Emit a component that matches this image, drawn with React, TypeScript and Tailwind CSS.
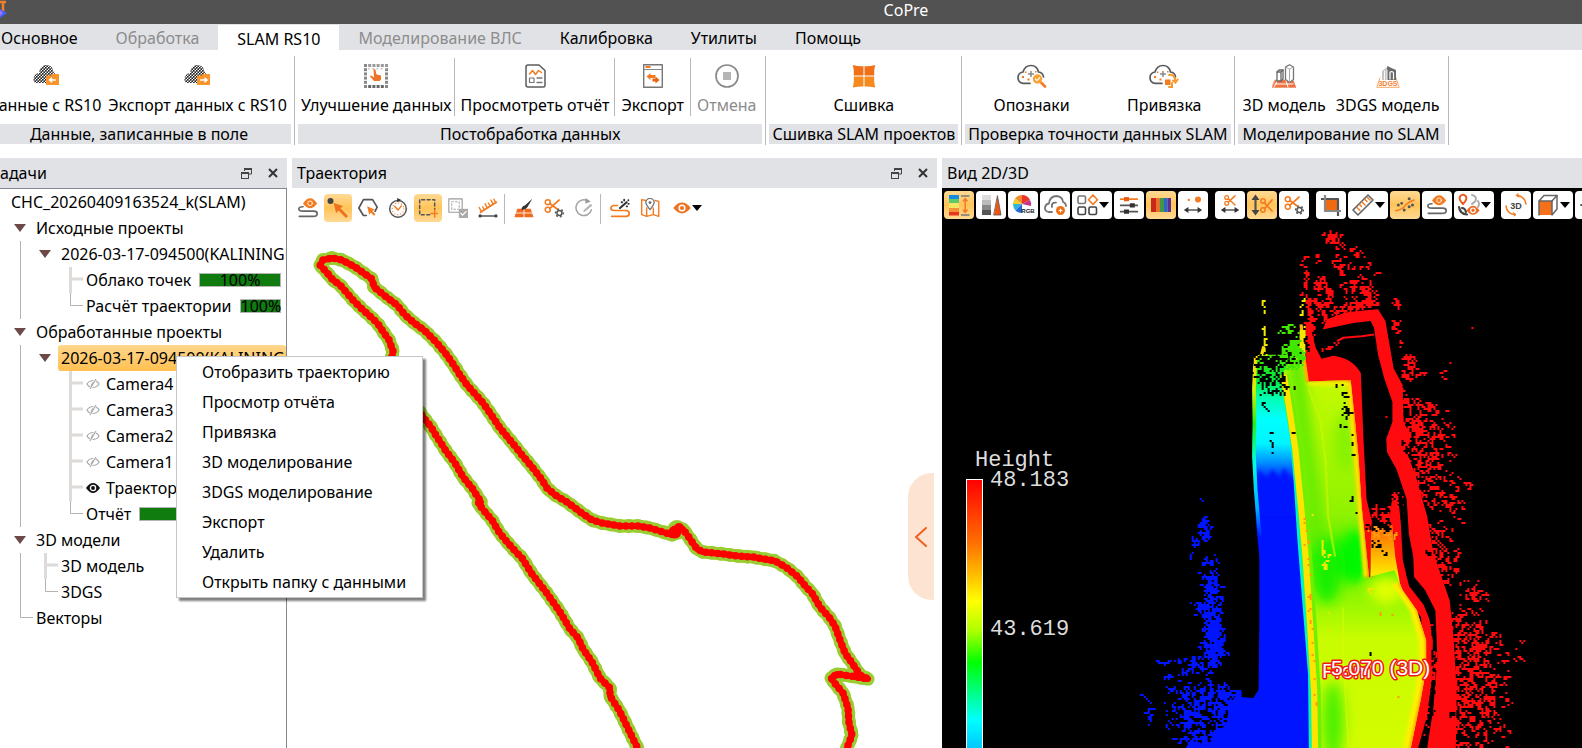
import React from 'react';
import clsx from 'clsx';

type IconFn = () => React.ReactElement;

const O = '#f47b20';

function Svg({ size = 'w-6 h-6', children }: { size?: string; children: React.ReactNode }) {
  return (
    <svg viewBox="0 0 24 24" className={clsx('shrink-0', size)} fill="none" strokeLinecap="round" strokeLinejoin="round" aria-hidden="true">
      {children}
    </svg>
  );
}

/* ---------- ribbon icons ---------- */

function CloudFolder({ arrow, className }: { arrow: 'left' | 'right'; className?: string }) {
  return (
    <svg viewBox="0 0 27 24" className={clsx('h-6 w-[27px]', className)} aria-hidden="true">
      <defs>
        <pattern id="dots" width="3" height="3" patternUnits="userSpaceOnUse">
          <rect width="3" height="3" fill="#fff" />
          <circle cx="0.8" cy="0.8" r="0.95" fill="#222" />
          <circle cx="2.3" cy="2.3" r="0.95" fill="#222" />
        </pattern>
      </defs>
      <path d="M1 18 C-1 13 3 9 6 9 C7 3 10 1 13 1 C18 1 20 4 20.500 8 L23 11 V19 H3 Z" fill="url(#dots)" />
      <path d="M13 11.500 h4.500 l1 -1.500 h7.500 v11 h-13 z" fill="#f9952b" />
      {arrow === 'left' ? (
        <path d="M23 16 h-6 M19 13.800 L16.500 16 L19 18.200" stroke="#fff" strokeWidth="1.500" fill="none" />
      ) : (
        <path d="M16 16 h6 M20.500 13.800 L23 16 L20.500 18.200" stroke="#fff" strokeWidth="1.500" fill="none" />
      )}
    </svg>
  );
}

const ImproveIcon: IconFn = () => (
  <Svg>
    {[0, 4.2, 8.4, 12.6, 16.8, 21].map((p) => (
      <g key={p}>
        <rect x={p} y="0" width="3" height="3" fill="#9a9a9a" />
        <rect x={p} y="21" width="3" height="3" fill="#666" />
        <rect x="0" y={p} width="3" height="3" fill="#888" />
        <rect x="21" y={p} width="3" height="3" fill="#888" />
        <rect x={p} y="4" width="1.500" height="1.500" fill="#bbb" />
      </g>
    ))}
    <path d="M9.500 5.500 q1.500 -1 2 .5 l1 4.500 l4.500 1 v4 l-1.500 1.500 h-5.500 l-4 -4.500 q.5 -1.500 2 -.5 l2 1.500 z" fill="#ee7328" />
  </Svg>
);

const ReportIcon: IconFn = () => (
  <Svg>
    <path d="M5 1 h11 l6 5.500 v15 q0 1.500 -1.500 1.500 h-15.500 q-2 0 -2 -2 v-18 q0 -2 2 -2 z" stroke="#5c5c5c" strokeWidth="1.500" />
    <path d="M6.500 10 l3 -3.500 l3 4 l3 -4 l3 2" stroke={O} strokeWidth="1.500" />
    <rect x="6.500" y="14" width="4.500" height="4.500" stroke="#777" strokeWidth="1.200" />
    <path d="M14 14 h5 M14 18.500 h5" stroke="#777" strokeWidth="1.300" />
  </Svg>
);

const ExportIcon: IconFn = () => (
  <Svg>
    <rect x="2.700" y=".7" width="18.600" height="22.600" stroke="#777" strokeWidth="1.400" />
    <path d="M3 5.500 h18" stroke="#888" strokeWidth="1" />
    <rect x="4.500" y="2" width="5" height="2" fill={O} />
    <path d="M5.500 12.500 l4 -3.500 v2 h5 v3 h-5 v2 z" fill={O} />
    <path d="M18.500 16 l-4 -3.500 v2 h-3 v3 h3 v2 z" fill="#e86010" />
  </Svg>
);

const CancelIcon: IconFn = () => (
  <Svg>
    <circle cx="12" cy="12" r="11" stroke="#8a8a8a" strokeWidth="1.700" />
    <rect x="8" y="8" width="8" height="8" fill="#b5b5b5" />
  </Svg>
);

const StitchIcon: IconFn = () => (
  <Svg>
    <path d="M.8 1 Q6 2.500 11.500 2.200 V11.500 H1.800 Q2.300 6 .8 1 Z M23.200 1 Q18 2.500 12.500 2.200 V11.500 H22.200 Q21.700 6 23.200 1 Z" fill="#f07018" />
    <path d="M.8 23.500 Q6 22.500 11.500 22.600 V12.600 H1.800 Q2.300 18 .8 23.500 Z M23.200 23.500 Q18 22.500 12.500 22.600 V12.600 H22.200 Q21.700 18 23.200 23.500 Z" fill="#f58a20" />
  </Svg>
);

function CheckCloud({ children }: { children: React.ReactNode }) {
  return (
    <svg viewBox="0 0 30 24" className="h-6 w-[30px]" fill="none" strokeLinecap="round" aria-hidden="true">
      <path d="M13 19.300 H6 Q1 18.500 1 13.500 Q1 9 6 8 Q8 1.500 14 1.500 Q20 1.500 21.500 8 Q26 8.500 26.500 13" stroke="#5a5a5a" strokeWidth="1.700" />
      <path d="M14 7.500 v5 M11.500 10 h5" stroke="#888" strokeWidth="1.500" />
      <g fill={O}>
        <rect x="5" y="12" width="2" height="2" /><rect x="8" y="7.500" width="1.500" height="1.500" /><rect x="10.500" y="14.500" width="2" height="2" /><rect x="18" y="7" width="1.500" height="1.500" />
      </g>
      {children}
    </svg>
  );
}

const MarksIcon: IconFn = () => (
  <CheckCloud>
    <circle cx="20.500" cy="15" r="4.700" fill="#f9a030" />
    <path d="M18.500 15 l1.500 1.700 l2.800 -3" stroke="#fff" strokeWidth="1.200" />
    <path d="M24.500 19 l3.500 3.500" stroke={O} strokeWidth="2.600" />
  </CheckCloud>
);

const BindIcon: IconFn = () => (
  <CheckCloud>
    <rect x="16" y="15.500" width="5.500" height="5.500" fill={O} />
    <path d="M20 11 q5 -1 6 4 v2 M24 16.500 l2.500 2 l2.200 -3 M20 23 h3 v-4" stroke="#f79a2a" strokeWidth="2" />
  </CheckCloud>
);

const Model3DIcon: IconFn = () => (
  <Svg>
    <path d="M3 16 H21 L24 23.500 H0 Z" fill="#f07040" stroke="#ee8860" strokeWidth=".6" />
    <path d="M6 16 L2 23 M14 17 L16 23 M3 20 h18" stroke="#fff" strokeWidth="1" />
    <path d="M5 8 l2 -2 h4 v9 l-2 2 h-4 z" fill="#fff" stroke="#666" strokeWidth="1.300" />
    <path d="M5 8 h4 v8.500 M9 8 l2 -2" stroke="#666" strokeWidth="1.300" />
    <path d="M13.500 3 l4 -2.300 l4 2.300 v12.500 l-4 3 l-4 -3 z" fill="#fff" stroke="#777" strokeWidth="1.300" />
    <path d="M13.500 3 l4 2.200 l4 -2.200 M17.500 5.200 v13" stroke="#aaa" strokeWidth="1" />
  </Svg>
);

const Gs3DIcon: IconFn = () => (
  <Svg>
    <path d="M4 14 L.8 23.300 H23.200 L20 14" stroke="#f5a860" strokeWidth="1" />
    <path d="M6 7 L13 2 V16 H6 Z" fill="#c4c4c4" />
    <path d="M11 2 l9 4 v10 h-9 z" fill="#6a6a6a" />
    <path d="M8.500 7 v9 M11 6 v10" stroke="#fff" strokeWidth=".9" />
    <path d="M14 15 v-7 q3 -1 3.500 1 v6" stroke="#fff" strokeWidth="1.200" />
    <text x="12" y="22.300" textAnchor="middle" fill="#f08030" fontFamily="Liberation Sans, sans-serif" fontWeight="700" fontSize="7">3DGS</text>
  </Svg>
);

/* ---------- toolbar icons ---------- */

const TrackEyeIcon: IconFn = () => (
  <Svg size="w-5 h-5">
    <path d="M6 10.500 Q1 10.500 1 13 Q1 15.800 6 15.800 H19 Q23 15.800 23 18.800 Q23 22 18 22 H1.500" stroke="#666" strokeWidth="2" />
    <path d="M6 6.500 Q14.500 -6 23 6.500 Q14.500 18 6 6.500 Z" fill={O} />
    <circle cx="14.500" cy="6.300" r="2.800" stroke="#fff" strokeWidth="1" />
  </Svg>
);

const PickIcon: IconFn = () => (
  <Svg>
    <circle cx="4.500" cy="5" r="3" fill="#444" />
    <path d="M7.500 7 L17 10 L14.500 12.300 L22 20 L20 22 L12.500 14.500 L10.200 17 Z" fill="#ee7320" />
  </Svg>
);

const HexIcon: IconFn = () => (
  <Svg size="w-5 h-5">
    <path d="M10 21 H6.500 L1 12 L6.500 2 H17.500 L23 11 L20.500 16" stroke="#555" strokeWidth="2" />
    <path d="M11 10 l9.500 4 l-3.500 1.500 l4 4 l-1.800 1.800 l-4 -4 l-1.700 3 z" fill={O} />
  </Svg>
);

const ClockIcon: IconFn = () => (
  <Svg size="w-5 h-5">
    <circle cx="12" cy="13" r="10" stroke="#555" strokeWidth="1.800" />
    <circle cx="12" cy="13" r="7" stroke={O} strokeWidth="1.500" strokeDasharray="0 3.660" />
    <path d="M8 10 l4 4.500 l4 -5" stroke={O} strokeWidth="1.700" />
    <path d="M11 0 l5 2.500 l-5 2.500 z" fill="#333" />
  </Svg>
);

const SelectAddIcon: IconFn = () => (
  <Svg size="w-5 h-5">
    <path d="M14 20 H2 V2 H20 V14" stroke="#555" strokeWidth="1.800" strokeDasharray="3.500 3" />
    <path d="M20 14 v9 M15.500 18.500 h8" stroke={O} strokeWidth="1.800" />
  </Svg>
);

const SelectOkIcon: IconFn = () => (
  <Svg size="w-5 h-5">
    <rect x="1" y="1" width="16" height="16" stroke="#999" strokeWidth="1.300" />
    <rect x="4.500" y="4.500" width="9" height="9" stroke="#aaa" strokeWidth="1.300" strokeDasharray="2 2.500" />
    <rect x="13" y="13" width="11" height="11" fill="#aaa" />
    <path d="M15.500 18.500 l2 2 l4 -4" stroke="#fff" strokeWidth="1.500" />
  </Svg>
);

const MeasureIcon: IconFn = () => (
  <Svg size="w-5 h-5">
    <path d="M3 17 L22 5" stroke={O} strokeWidth="2.200" />
    <path d="M4 16 L1.500 11.500 M7.500 14 L5.500 10.500 M11 11.500 L8.500 7 M14.500 9.500 L12.500 6 M18 7 L15.500 2.500 M21 5 L19 1.500" stroke={O} strokeWidth="1.700" />
    <path d="M3 21.500 h18" stroke="#555" strokeWidth="1.700" />
    <circle cx="2.500" cy="21.500" r="2" fill="#444" /><circle cx="21.500" cy="21.500" r="2" fill="#444" />
  </Svg>
);

const PaintIcon: IconFn = () => (
  <Svg size="w-5 h-5">
    <path d="M4 13 H20 L23.500 23 H.5 Z" fill="#ee6a1e" />
    <path d="M2 18 H22 M12 13 V23" stroke="#fff" strokeWidth="1" />
    <path d="M22 1 L13 9 Q9 10 9 14 Q13 15 16 11 Z" fill="#333" />
  </Svg>
);

const CutGearIcon: IconFn = () => (
  <Svg size="w-5 h-5">
    <circle cx="4.500" cy="5" r="3" stroke={O} strokeWidth="1.800" />
    <circle cx="4.500" cy="14" r="3" stroke={O} strokeWidth="1.800" />
    <path d="M7 6.500 L17 14 M7 12.500 L18 2.500" stroke={O} strokeWidth="2.200" />
    <circle cx="18.500" cy="18" r="5" fill="#fff" />
    <circle cx="18.500" cy="18" r="3" stroke="#555" strokeWidth="1.800" />
    <circle cx="18.500" cy="18" r="4.700" stroke="#555" strokeWidth="1.600" strokeDasharray="1 3.900" />
  </Svg>
);

const RefreshIcon: IconFn = () => (
  <Svg size="w-5 h-5">
    <path d="M17.500 4 A9.500 9.500 0 1 0 21 14" stroke="#a3a3a3" strokeWidth="1.800" />
    <path d="M14 0 l6 4.500 l-6.500 2 z" fill="#999" />
    <path d="M20 7 L12 14 L11 17 L14 16 L22 9 Z" fill="#b8b8b8" />
  </Svg>
);

const WandIcon: IconFn = () => (
  <Svg size="w-5 h-5">
    <path d="M9 9 H4 Q1 10 1 12 Q1 15 5 15 H19 Q23 15 23 18.500 Q23 22 19 22 H2" stroke={O} strokeWidth="2" />
    <path d="M12 12 L20 5" stroke="#333" strokeWidth="2.500" />
    <path d="M17 2 v1 M22 7 h.5 M14 5 h.5 M22 2.500 v.2 M20 10 h.5" stroke="#333" strokeWidth="2.300" />
  </Svg>
);

const MapIcon: IconFn = () => (
  <Svg size="w-5 h-5">
    <path d="M7 3 L2 2 V20 L8 22 L16 20 L22.500 22 V4 L18 3 M8 12 V22 M16 12 V20" stroke={O} strokeWidth="1.700" />
    <path d="M12 14 Q7 8 7 5.500 A5 5 0 0 1 17 5.500 Q17 8 12 14 Z" fill="#fff" stroke="#777" strokeWidth="1.600" />
    <circle cx="12" cy="5.500" r="1.700" fill="#666" />
  </Svg>
);

const EyeIcon: IconFn = () => (
  <Svg size="w-5 h-5">
    <path d="M1.500 12 Q12 -1 22.500 12 Q12 25 1.500 12 Z" fill="#ee7320" />
    <circle cx="12" cy="12" r="4.300" fill="#fff" /><circle cx="12" cy="12" r="2.500" fill="#ee7320" />
  </Svg>
);

const HeightIcon: IconFn = () => (
  <Svg>
    <rect x="2" y="2" width="10" height="4" fill="#1689e0" /><rect x="2" y="6" width="10" height="4" fill="#5cc96a" />
    <rect x="2" y="10" width="10" height="5" fill="#f5e663" /><rect x="2" y="15" width="10" height="4" fill="#f5923a" />
    <rect x="2" y="19" width="10" height="3.500" fill="#e8391e" />
    <path d="M14.500 3 h7.500 M14.500 22 h7.500" stroke="#777" strokeWidth="1.500" />
    <path d="M18.200 6 v13 M16.300 8 l1.900 -2.500 l1.900 2.500 M16.300 17 l1.900 2.500 l1.900 -2.500" stroke={O} strokeWidth="1.500" />
  </Svg>
);

const IntensityIcon: IconFn = () => (
  <Svg>
    <rect x="3" y="2" width="9" height="5" fill="#ddd" /><rect x="3" y="7" width="9" height="5" fill="#bbb" />
    <rect x="3" y="12" width="9" height="5" fill="#888" /><rect x="3" y="17" width="9" height="5" fill="#555" />
    <path d="M18.500 3 L22 22 H15 Z" fill="#f0560f" stroke="#555" strokeWidth=".8" />
  </Svg>
);

const RgbIcon: IconFn = () => (
  <Svg>
    <path d="M11 11 L11 2 A9 9 0 0 1 19 7 Z" fill="#e9362c" /><path d="M11 11 L19 7 A9 9 0 0 1 20 13 Z" fill="#c5318d" />
    <path d="M11 11 L11 2 A9 9 0 0 0 4 5.500 Z" fill="#f28b30" /><path d="M11 11 L4 5.500 A9 9 0 0 0 2 11 Z" fill="#f0d030" />
    <path d="M11 11 L2 11 A9 9 0 0 0 4.500 17.500 Z" fill="#35b6d6" /><path d="M11 11 L4.500 17.500 A9 9 0 0 0 11 20 Z" fill="#2468e0" />
    <text x="17" y="20" textAnchor="middle" fontSize="6" fontWeight="700" fontFamily="Liberation Sans, sans-serif" fill="#222">RGB</text>
  </Svg>
);

const CloudClassIcon: IconFn = () => (
  <Svg>
    <path d="M9 19 H5.500 Q1.500 18 2 14.500 Q2.500 11 6 10.500 Q7 3 13.500 3 Q19.500 3.500 20 9 Q23 10 23 13" stroke="#777" strokeWidth="1.800" />
    <path d="M9 14 Q8 9.500 13 9.500" stroke="#666" strokeWidth="1.700" />
    <circle cx="17.500" cy="17.500" r="4.500" fill="#f07018" />
    <path d="M17.500 16 v3 M16 17.500 h3" stroke="#fff" strokeWidth="1.100" />
  </Svg>
);

const ShapesIcon: IconFn = () => (
  <Svg>
    <rect x="3" y="3" width="7.500" height="7.500" rx="1.500" stroke="#777" strokeWidth="1.600" />
    <path d="M18 2 l4.500 4.700 l-4.500 4.700 l-4.500 -4.700 z" stroke={O} strokeWidth="1.600" />
    <rect x="3" y="14" width="7.500" height="7.500" rx="1.500" stroke="#444" strokeWidth="1.600" />
    <rect x="14" y="14" width="7.500" height="7.500" rx="1.500" stroke="#444" strokeWidth="1.600" />
  </Svg>
);

const SlidersIcon: IconFn = () => (
  <Svg size="w-5 h-5">
    <path d="M2 5 h20" stroke={O} strokeWidth="2" /><path d="M2 12.500 h20 M2 20 h20" stroke="#555" strokeWidth="2" />
    <path d="M6 5 h6" stroke="#e85c10" strokeWidth="5" strokeLinecap="butt" />
    <path d="M13 12.500 h6 M6 20 h6" stroke="#333" strokeWidth="5" strokeLinecap="butt" />
  </Svg>
);

const BandsIcon: IconFn = () => (
  <Svg>
    <rect x="2" y="5" width="5" height="14" fill="#c8271b" /><rect x="7" y="5" width="4" height="14" fill="#e8702a" />
    <rect x="11" y="5" width="4" height="14" fill="#3e9a4a" /><rect x="15" y="5" width="3.500" height="14" fill="#2a67c9" />
    <rect x="18.500" y="5" width="3.500" height="14" fill="#5c2f93" />
  </Svg>
);

function HArrow() {
  return (
    <>
      <path d="M4 18 h16" stroke="#555" strokeWidth="1.800" />
      <path d="M6.500 14.500 L1 18 L6.500 21.500 Z M17.500 14.500 L23 18 L17.500 21.500 Z" fill="#333" />
    </>
  );
}

const PointSizeIcon: IconFn = () => (
  <Svg size="w-5 h-5">
    <circle cx="7" cy="6" r="1.400" fill={O} /><circle cx="18" cy="5.500" r="3.600" fill={O} /><HArrow />
  </Svg>
);

const CutHIcon: IconFn = () => (
  <Svg size="w-5 h-5">
    <circle cx="8" cy="3" r="2.300" stroke={O} strokeWidth="1.500" /><circle cx="8" cy="10" r="2.300" stroke={O} strokeWidth="1.500" />
    <path d="M10 4.500 L18 12 M10 8.500 L18 1" stroke={O} strokeWidth="1.800" />
    <HArrow />
  </Svg>
);

const CutVIcon: IconFn = () => (
  <Svg>
    <path d="M5.500 5 v14" stroke="#555" strokeWidth="2.200" />
    <path d="M1.500 7 L5.500 1.500 L9.500 7 Z M1.500 17 L5.500 22.500 L9.500 17 Z" fill="#444" />
    <circle cx="13" cy="8" r="2.200" stroke={O} strokeWidth="1.500" /><circle cx="13" cy="17" r="2.200" stroke={O} strokeWidth="1.500" />
    <path d="M14.500 10 L22 18 M14.500 15.500 L22 7" stroke={O} strokeWidth="1.800" />
  </Svg>
);

const CropIcon: IconFn = () => (
  <Svg>
    <rect x="7" y="6" width="12" height="12" fill="#f06a10" />
    <path d="M2 6 H19 V23" stroke="#555" strokeWidth="2.200" strokeLinecap="butt" />
    <path d="M6 2 V18 H22" stroke="#888" strokeWidth="2.200" strokeLinecap="butt" />
  </Svg>
);

const RulerIcon: IconFn = () => (
  <Svg>
    <path d="M2 17 L17 2 L22 7 L7 22 Z" stroke="#666" strokeWidth="1.600" />
    <path d="M6 14.500 l3 3 M8.500 11.500 l2 2 M11 9 l3 3 M14 6.500 l2 2 M16.500 4.500 l2.500 2.500" stroke={O} strokeWidth="1.500" />
  </Svg>
);

const LinkPtsIcon: IconFn = () => (
  <Svg size="w-5 h-5">
    <path d="M1 19 Q9 17 12 13 Q15 9 23 6" stroke={O} strokeWidth="1.800" />
    <g fill="#555">
      <circle cx="4" cy="12" r="1.800" /><circle cx="8" cy="10" r="1.600" /><circle cx="11" cy="18" r="1.800" /><circle cx="17" cy="14" r="1.800" /><circle cx="21" cy="12" r="1.800" /><circle cx="17" cy="4.500" r="1.800" />
    </g>
  </Svg>
);

const PinEyeIcon: IconFn = () => (
  <Svg>
    <path d="M6 11 Q1.500 6.500 3 3.500 Q6 0 9 3.500 Q10.500 6.500 6 11 Z" stroke="#ee5a20" strokeWidth="2" />
    <path d="M15 2 Q20 3 18.500 8 L15 11 M21 8 q2 3 0 6" stroke="#aaa" strokeWidth="1.900" />
    <path d="M2 14 Q3 21 10 21.500 M5 15 Q8 15 9 19" stroke="#444" strokeWidth="2.200" />
    <path d="M9.500 17.500 Q16 8 22.500 17.500 Q16 26 9.500 17.500 Z" fill="#ee6a20" />
    <circle cx="16" cy="17.300" r="2.300" stroke="#fff" strokeWidth="1.200" />
  </Svg>
);

const Rot3DIcon: IconFn = () => (
  <Svg>
    <path d="M14 2.500 Q21 4 22 11 M2 13 Q3 20.500 10 21.500" stroke={O} strokeWidth="1.600" />
    <path d="M14 .5 l-2 2 l3 1.500 M10 23 l2 -1.500 l-2.500 -1.800" fill={O} stroke={O} strokeWidth="1" />
    <text x="12" y="15.500" textAnchor="middle" fontSize="9" fontFamily="Liberation Sans, sans-serif" fontWeight="700" fill="#444">3D</text>
  </Svg>
);

const CubeIcon: IconFn = () => (
  <Svg>
    <rect x="3" y="8" width="13" height="14" fill="#f5701a" />
    <path d="M3 22 V8 L8 2.500 H21 L16 8 H3" stroke="#666" strokeWidth="1.500" />
    <path d="M21 2.500 V16 L16 22 V8" stroke="#666" strokeWidth="1.500" />
  </Svg>
);

const MoveIcon: IconFn = () => (
  <Svg><path d="M3 12 h20 M12 1 v22" stroke="#555" strokeWidth="1.800" /></Svg>
);

/* ---------- data ---------- */

const tabs = [
  { name: 'Обработка', disabled: true },
  { name: 'SLAM RS10', active: true },
  { name: 'Моделирование ВЛС', disabled: true },
  { name: 'Калибровка' },
  { name: 'Утилиты' },
  { name: 'Помощь' },
];

const menuItems = [
  'Отобразить траекторию', 'Просмотр отчёта', 'Привязка', '3D моделирование',
  '3DGS моделирование', 'Экспорт', 'Удалить', 'Открыть папку с данными',
];

interface TreeRow {
  guides: string; // one char per 25px column: a arrow, v line, t tee, l corner, . empty
  text: string;
  selected?: boolean;
  eye?: 'on' | 'off';
  progress?: string;
}

const tree: TreeRow[] = [
  { guides: '', text: 'CHC_20260409163524_k(SLAM)' },
  { guides: 'a', text: 'Исходные проекты' },
  { guides: 'va', text: '2026-03-17-094500(KALININGRAD)' },
  { guides: 'v.t', text: 'Облако точек', progress: '100%' },
  { guides: 'v.l', text: 'Расчёт траектории', progress: '100%' },
  { guides: 'a', text: 'Обработанные проекты' },
  { guides: 'va', text: '2026-03-17-094500(KALININGRAD)', selected: true },
  { guides: 'v.t', text: 'Camera4 I', eye: 'off' },
  { guides: 'v.t', text: 'Camera3 I', eye: 'off' },
  { guides: 'v.t', text: 'Camera2 I', eye: 'off' },
  { guides: 'v.t', text: 'Camera1 I', eye: 'off' },
  { guides: 'v.t', text: 'Траектория', eye: 'on' },
  { guides: 'v.l', text: 'Отчёт', progress: '' },
  { guides: 'a', text: '3D модели' },
  { guides: 'vt', text: '3D модель' },
  { guides: 'vl', text: '3DGS' },
  { guides: 'l', text: 'Векторы' },
];

interface Tool { name: string; icon: IconFn; on?: boolean; drop?: boolean }

const trackTools: Tool[][] = [
  [
    { name: 'Показать траекторию', icon: TrackEyeIcon },
    { name: 'Выбор точки', icon: PickIcon, on: true },
    { name: 'Выбор полигоном', icon: HexIcon },
    { name: 'Выбор по времени', icon: ClockIcon },
    { name: 'Добавить область', icon: SelectAddIcon, on: true },
    { name: 'Применить область', icon: SelectOkIcon },
    { name: 'Измерение', icon: MeasureIcon },
  ],
  [
    { name: 'Окрасить', icon: PaintIcon },
    { name: 'Обрезка', icon: CutGearIcon },
    { name: 'Обновить', icon: RefreshIcon },
  ],
  [
    { name: 'Автообработка', icon: WandIcon },
    { name: 'Карта', icon: MapIcon },
    { name: 'Видимость', icon: EyeIcon, drop: true },
  ],
];

const viewTools: Tool[][] = [
  [
    { name: 'По высоте', icon: HeightIcon, on: true },
    { name: 'По интенсивности', icon: IntensityIcon },
    { name: 'RGB', icon: RgbIcon },
    { name: 'По облаку', icon: CloudClassIcon },
    { name: 'По классам', icon: ShapesIcon, drop: true },
    { name: 'Настройки', icon: SlidersIcon },
    { name: 'Шкала', icon: BandsIcon, on: true },
    { name: 'Размер точек', icon: PointSizeIcon },
  ],
  [
    { name: 'Горизонтальный срез', icon: CutHIcon },
    { name: 'Вертикальный срез', icon: CutVIcon, on: true },
    { name: 'Настройки среза', icon: CutGearIcon },
  ],
  [
    { name: 'Обрезать', icon: CropIcon },
    { name: 'Линейка', icon: RulerIcon, drop: true },
    { name: 'Точки траектории', icon: LinkPtsIcon, on: true },
    { name: 'Траектория', icon: TrackEyeIcon },
    { name: 'Маркеры', icon: PinEyeIcon, drop: true },
  ],
  [
    { name: 'Вращение', icon: Rot3DIcon },
    { name: 'Куб', icon: CubeIcon, drop: true },
    { name: 'Перемещение', icon: MoveIcon },
  ],
];

/* ---------- ribbon ---------- */

function RibbonButton({ label, disabled, className, children }: { label: string; disabled?: boolean; className?: string; children: React.ReactNode }) {
  return (
    <button type="button" disabled={disabled} className={clsx('flex flex-col items-center gap-[7px] pt-3.5 pb-px leading-5 whitespace-nowrap', disabled && 'text-[#8c8c8c]', className)}>
      {children}
      <span>{label}</span>
    </button>
  );
}

function RibbonGroup({ label, className, labelClass, children }: { label: string; className?: string; labelClass?: string; children: React.ReactNode }) {
  return (
    <section aria-label={label} className="flex shrink-0">
      <div className={clsx('flex flex-col px-[3px]', className)}>
        <div className="flex">{children}</div>
        <div className={clsx('mt-2 h-5 bg-[#e1e2e6] px-[3px] text-center leading-5 whitespace-nowrap', labelClass)}>{label}</div>
      </div>
      <div className="mt-1.5 h-[89px] w-px bg-[#b9b9b9]" />
    </section>
  );
}

function Divider() {
  return <div className="mt-2 h-[58px] w-px shrink-0 bg-[#b9b9b9]" />;
}

/* ---------- panels ---------- */

function PanelHeader({ title, buttons, className }: { title: string; buttons?: boolean; className?: string }) {
  return (
    <header className={clsx('flex h-[30px] shrink-0 items-center bg-[#e1e2e6]', className)}>
      <h2 className="leading-5">{title}</h2>
      {buttons && (
        <div className="ml-auto flex gap-4 pr-[9px]">
          <button type="button" aria-label="Открепить">
            <svg viewBox="0 0 11 11" className="h-[11px] w-[11px]" fill="none" stroke="#444" aria-hidden="true">
              <path d="M3.500 3 V.5 H10.500 V6 H8" strokeWidth="1" /><path d="M3 1 H11" strokeWidth="2" />
              <rect x=".5" y="5" width="7" height="5.500" /><path d="M0 5 H8" strokeWidth="2" />
            </svg>
          </button>
          <button type="button" aria-label="Закрыть">
            <svg viewBox="0 0 10 10" className="h-2.5 w-2.5" stroke="#333" strokeWidth="2" aria-hidden="true">
              <path d="M1 1 L9 9 M9 1 L1 9" />
            </svg>
          </button>
        </div>
      )}
    </header>
  );
}

function Guide({ kind }: { kind: string }) {
  return (
    <svg viewBox="0 0 25 26" className="h-[26px] w-[25px] shrink-0" fill="none" aria-hidden="true">
      {kind === 'a' && <path d="M6 9 H18 L12 17 Z" fill="#6b4a48" />}
      {kind === 'v' && <path d="M12.500 0 V26" stroke="#b8b2ae" />}
      {kind === 't' && <path d="M12.500 0 V26 M12.500 12 H25" stroke="#dedad8" strokeWidth="3" />}
      {kind === 'l' && <path d="M12.500 0 V12.500 H25" stroke="#b8b2ae" />}
    </svg>
  );
}

function TreeEye({ on }: { on: boolean }) {
  return on ? (
    <svg viewBox="0 0 14 12" className="mr-1.5 h-3 w-3.5 shrink-0" aria-hidden="true">
      <path d="M0 6 Q7 -4 14 6 Q7 16 0 6 Z" fill="#111" />
      <circle cx="7" cy="6" r="2.600" fill="#111" stroke="#fff" strokeWidth="1.300" />
    </svg>
  ) : (
    <svg viewBox="0 0 14 12" className="mr-1.5 h-3 w-3.5 shrink-0" fill="none" stroke="#aaa" strokeWidth="1.200" aria-hidden="true">
      <path d="M7.500 2.500 Q3 2.500 1 6 Q2 8 4 9 M10 3 Q12 4 13 6 Q11 9.500 6.500 9.500 M10 1 L4 11 M7 4.500 L5 8" />
    </svg>
  );
}

function TaskTree() {
  return (
    <ul role="tree" aria-label="Задачи" className="min-h-0 flex-1 overflow-hidden border-t border-r border-[#828790]">
      {tree.map((row, i) => (
        <li key={i} role="treeitem" aria-selected={!!row.selected} className="flex h-[26px] pl-2">
          {row.guides.split('').map((g, n) => <Guide key={n} kind={g} />)}
          <div className={clsx('flex min-w-0 flex-1 items-center overflow-hidden px-[3px] leading-6 whitespace-nowrap', row.selected && 'rounded-[3px] bg-linear-to-b from-[#ffd68c] to-[#ffc04f]')}>
            {row.eye && <TreeEye on={row.eye === 'on'} />}
            <span className="shrink-0">{row.text}</span>
            {row.progress !== undefined && (
              <div className="mr-0.5 ml-2 h-3.5 min-w-0 flex-1 border border-[#b4b4b4] bg-[#107c10] text-center leading-3">{row.progress}</div>
            )}
          </div>
        </li>
      ))}
    </ul>
  );
}

function Caret() {
  return <svg viewBox="0 0 10 6" className="h-1.5 w-2.5 shrink-0" aria-hidden="true"><path d="M0 0 H10 L5 6 Z" fill="#000" /></svg>;
}

function TrackToolbar() {
  return (
    <div className="flex gap-0.5 pt-1.5 pl-0.5">
      {trackTools.map((group, i) => (
        <React.Fragment key={i}>
          {i > 0 && <div className="mr-[3px] h-[30px] w-px bg-[#b9b9b9]" />}
          {group.map((t) => (
            <button key={t.name} type="button" aria-label={t.name} className={clsx('flex h-7 items-center justify-center rounded', t.drop ? 'w-[42px]' : 'w-7', t.on && 'bg-linear-to-b from-[#ffd993] via-[#ffc459] to-[#ffd993]')}>
              <t.icon />
              {t.drop && <Caret />}
            </button>
          ))}
        </React.Fragment>
      ))}
    </div>
  );
}

function ViewToolbar() {
  return (
    <div className="flex gap-[7px] overflow-hidden pt-[3px] pl-0.5">
      {viewTools.map((group, i) => (
        <div key={i} className="flex shrink-0 gap-0.5">
          {group.map((t) => (
            <button key={t.name} type="button" aria-label={t.name} className={clsx('flex h-7 items-center justify-center rounded', t.drop ? 'w-10' : 'w-[30px]', t.on ? 'bg-linear-to-b from-[#ffd993] via-[#ffc459] to-[#ffd993]' : 'bg-white')}>
              <t.icon />
              {t.drop && <Caret />}
            </button>
          ))}
        </div>
      ))}
    </div>
  );
}

const trackA =
  'M392 357 L393 351 L389 340 L382 330 L378 324 L371 317 L362 309 L353 300 L346 292 L340 285 L333 280 L328 274 L320 265 L323 260 L332 258 L342 260 L355 267 L372 279 L374 287 L385 296 L397 305 L405 315 L413 322 L425 331 L437 343 L446 354 L453 364 L460 375 L467 385 L475 394 L483 403 L492 416 L500 428 L510 440 L522 455 L532 467 L542 480 L547 488 L555 495 L567 502 L575 508 L583 514 L592 520 L602 523 L620 526 L638 526 L650 528 L660 531 L672 535 L677 528 L683 529 L690 539 L697 549 L703 552 L723 554 L738 556 L753 557 L775 561 L787 568 L798 577 L806 587 L812 593 L820 607 L829 617 L835 626 L840 640 L845 653 L852 663 L860 675 L868 679 L850 676 L837 674 L831 678 L837 686 L843 693 L848 708 L849 723 L852 735 L847 748 L845 760';
const trackB =
  'M392 357 L400 385 L424 418 L431 427 L437 437 L446 451 L455 463 L463 477 L472 488 L481 502 L478 503 L485 512 L492 520 L499 532 L507 542 L515 551 L522 558 L532 574 L546 592 L560 612 L570 629 L578 638 L583 649 L592 662 L600 678 L610 688 L610 696 L619 710 L622 716 L637 747 L642 760';

function TrackCanvas() {
  return (
    <svg viewBox="292 224 645 524" preserveAspectRatio="xMinYMin slice" className="h-full w-full" fill="none" strokeLinecap="round" strokeLinejoin="round" role="img" aria-label="Траектория">
      {[trackA, trackB].map((d) => <path key={d} d={d} stroke="#9acd32" strokeWidth="13" />)}
      {[trackA, trackB].map((d) => <path key={d} d={d} stroke="#9acd32" strokeWidth="14" strokeDasharray="0 9" />)}
      <circle cx="677" cy="530" r="10" fill="#9acd32" />
      {[trackA, trackB].map((d) => (
        <g key={d} stroke="#f00">
          <path d={d} strokeWidth="6" />
          <path d={d} strokeWidth="7.500" strokeDasharray="0 6" />
        </g>
      ))}
      <circle cx="675" cy="532" r="6.500" fill="#f00" />
      <circle cx="679" cy="528" r="5" fill="#f00" />
    </svg>
  );
}

/* ---------- point cloud ---------- */

function rng(seed: number) {
  let s = seed;
  return () => {
    s = (s * 1664525 + 1013904223) % 4294967296;
    return s / 4294967296;
  };
}

// x1, y1, x2, y2, spread, count
type Spray = [number, number, number, number, number, number];

// Scatter little clumps of points round each segment, snapped to the point grid
function spray(list: Spray[], seed: number, clumpMax: number) {
  const rand = rng(seed);
  let d = '';
  for (const [x1, y1, x2, y2, w, n] of list) {
    for (let i = 0; i < n; i++) {
      const t = rand();
      const off = (rand() + rand() + rand() - 1.5) * w;
      let x = x1 + (x2 - x1) * t + off;
      let y = y1 + (y2 - y1) * t + (rand() - 0.5) * w * 0.8;
      const clump = 1 + Math.floor(rand() * clumpMax);
      for (let k = 0; k < clump; k++) {
        d += `M${(Math.round(x / 4.88) * 4.88).toFixed(1)} ${(Math.round(y / 5.94) * 5.94).toFixed(1)}h4.9v6h-4.9z`;
        x += (rand() - 0.5) * 10;
        y += (rand() - 0.5) * 12;
      }
    }
  }
  return d;
}

const redDots = spray([
  [940, 40, 975, 80, 20, 26], [880, 45, 990, 45, 8, 3], [890, 100, 892, 240, 9, 20], [922, 100, 918, 130, 8, 6],
  [965, 105, 985, 155, 14, 16], [1000, 90, 1030, 170, 36, 18], [1015, 180, 1045, 240, 38, 60], [920, 180, 935, 290, 16, 34],
  [925, 165, 955, 220, 8, 24], [955, 220, 930, 310, 10, 14], [960, 270, 1060, 235, 26, 70], [1110, 230, 1118, 260, 12, 10],
  [1105, 300, 1128, 370, 14, 15], [897, 230, 905, 340, 8, 40], [1145, 400, 1145, 470, 20, 34], [1120, 480, 1135, 560, 18, 26],
  [1175, 450, 1185, 465, 8, 3], [1222, 455, 1223, 460, 4, 2], [1165, 540, 1195, 560, 36, 32], [1145, 590, 1190, 650, 60, 110], [1140, 660, 1200, 720, 50, 50],
  [1170, 700, 1220, 860, 50, 95], [1255, 760, 1275, 900, 24, 20], [1200, 900, 1235, 1000, 42, 50], [1200, 1000, 1240, 1070, 42, 54],
  [1290, 1080, 1310, 1130, 36, 36], [1265, 1150, 1300, 1300, 66, 150], [1275, 1280, 1285, 1560, 90, 330], [1340, 1200, 1350, 1450, 64, 60],
  [1235, 600, 1240, 700, 28, 10], [1110, 810, 1110, 900, 16, 44], [1060, 850, 1100, 905, 30, 24], [1390, 1220, 1400, 1370, 30, 6],
  [1210, 680, 1215, 760, 34, 14], [1285, 740, 1293, 800, 6, 4], [1245, 422, 1246, 424, 0, 1], [935, 385, 970, 362, 6, 6],
], 7, 4) + 'M1298 318h4.900v6h-4.900z';

const blueDots = spray([
  [640, 885, 650, 950, 14, 46], [622, 945, 622, 970, 9, 10], [635, 990, 665, 1040, 28, 16], [658, 1050, 660, 1130, 22, 80],
  [630, 1130, 640, 1180, 16, 14], [660, 1130, 665, 1290, 26, 190], [680, 1230, 660, 1330, 18, 80], [640, 1310, 620, 1340, 40, 32],
  [530, 1315, 610, 1300, 14, 14], [540, 1355, 610, 1340, 8, 9], [505, 1390, 515, 1500, 12, 14], [555, 1380, 560, 1500, 26, 16],
  [600, 1380, 605, 1560, 30, 70], [640, 1380, 650, 1560, 56, 170], [690, 1380, 700, 1560, 40, 190], [638, 832, 638, 833, 0, 1],
], 21, 4);

const greenDots = spray([
  [845, 320, 880, 345, 20, 14], [830, 405, 875, 350, 16, 36], [865, 380, 875, 430, 18, 60], [800, 400, 850, 440, 30, 12],
], 5, 4);

const yellowDots = spray([
  [788, 230, 790, 300, 1, 6], [790, 310, 793, 400, 3, 18], [878, 230, 882, 300, 8, 8], [880, 310, 888, 390, 7, 30],
  [930, 945, 940, 1035, 5, 18], [907, 870, 908, 880, 1, 1], [947, 870, 949, 1230, 1, 5], [1035, 1110, 1050, 1095, 8, 6],
], 9, 2);

const orangeDots = spray([
  [1058, 915, 1100, 940, 30, 24], [888, 850, 905, 1200, 3, 18], [905, 1200, 915, 1450, 3, 8], [1070, 1170, 1105, 1172, 2, 3], [1118, 1410, 1119, 1412, 1, 2],
], 13, 2);

const blackDots = spray([
  [785, 410, 830, 430, 40, 100], [785, 450, 835, 490, 40, 75], [785, 500, 830, 510, 30, 22], [785, 540, 800, 570, 8, 6],
  [962, 490, 985, 490, 3, 3], [985, 500, 995, 590, 10, 18], [975, 605, 990, 612, 6, 3], [1003, 630, 1008, 700, 1, 6],
  [1002, 825, 1016, 870, 6, 6], [1065, 950, 1090, 1000, 22, 10], [1055, 905, 1100, 920, 30, 24], [857, 628, 864, 632, 3, 5],
  [806, 630, 810, 690, 1, 4], [1130, 655, 1142, 685, 8, 14], [1203, 1200, 1203, 1480, 3, 20], [1190, 985, 1194, 995, 5, 6],
  [1230, 1465, 1265, 1465, 10, 6], [1045, 1285, 1055, 1290, 8, 3], [888, 340, 896, 390, 5, 9],
], 3, 2);

function CloudCanvas() {
  return (
    <svg viewBox="942 222 640 526" preserveAspectRatio="xMinYMin slice" className="h-full w-full" role="img" aria-label="Облако точек">
      <defs>
        <linearGradient id="water" gradientUnits="userSpaceOnUse" x1="0" y1="400" x2="0" y2="800">
          <stop offset="0" stopColor="#4ce800" /><stop offset=".18" stopColor="#00e838" /><stop offset=".32" stopColor="#00ffb0" />
          <stop offset=".48" stopColor="#00ffff" /><stop offset=".66" stopColor="#00f4ff" /><stop offset=".8" stopColor="#0090ff" />
          <stop offset=".93" stopColor="#0018ff" /><stop offset="1" stopColor="#0014ff" />
        </linearGradient>
        <linearGradient id="shore" gradientUnits="userSpaceOnUse" x1="0" y1="400" x2="0" y2="940">
          <stop offset="0" stopColor="#ffd800" /><stop offset=".2" stopColor="#d8f000" /><stop offset=".38" stopColor="#20f020" />
          <stop offset=".6" stopColor="#00ffe0" /><stop offset=".85" stopColor="#00b0ff" /><stop offset="1" stopColor="#0018ff" />
        </linearGradient>
        <linearGradient id="slope" gradientUnits="userSpaceOnUse" x1="0" y1="480" x2="0" y2="1568">
          <stop offset="0" stopColor="#c4fa00" /><stop offset=".2" stopColor="#a8f600" /><stop offset=".36" stopColor="#90f200" />
          <stop offset=".48" stopColor="#4cf000" /><stop offset=".58" stopColor="#8cf600" /><stop offset=".7" stopColor="#c8fc00" /><stop offset="1" stopColor="#d4fc00" />
        </linearGradient>
        <linearGradient id="bay" gradientUnits="userSpaceOnUse" x1="0" y1="890" x2="0" y2="1080">
          <stop offset="0" stopColor="#ff5000" /><stop offset=".4" stopColor="#ff9800" /><stop offset=".8" stopColor="#ffe000" /><stop offset="1" stopColor="#f4ff00" />
        </linearGradient>
        <linearGradient id="scale" x1="0" y1="0" x2="0" y2="1">
          <stop offset="0" stopColor="#f00" /><stop offset=".22" stopColor="#ff7000" /><stop offset=".42" stopColor="#ff0" />
          <stop offset=".52" stopColor="#b0ff00" /><stop offset=".63" stopColor="#0f0" /><stop offset=".83" stopColor="#0ff" /><stop offset="1" stopColor="#009cff" />
        </linearGradient>
        <filter id="soft" x="-20%" y="-20%" width="140%" height="140%"><feGaussianBlur stdDeviation="4" /></filter>
        <filter id="softer" x="-50%" y="-50%" width="200%" height="200%"><feGaussianBlur stdDeviation="16" /></filter>
        <clipPath id="land">
          <path d="M835 460 L850 430 L872 400 L888 400 L895 480 L1003 475 L1014 600 L1022 700 L1030 850 L1048 1060 L1110 1040 L1130 1100 L1165 1160 L1188 1250 L1188 1330 L1175 1420 L1150 1568 H905 L905 1400 L895 1200 L880 1020 L870 850 L862 700 L850 560 Z" />
        </clipPath>
      </defs>

      <g transform="translate(940 220) scale(.4094 .3367)">
        <path d={blueDots} fill="#0014ff" />
        <path d={redDots} fill="#ff0a0e" />

        {/* water */}
        <path d="M770 405 L795 400 L850 400 L870 700 L885 950 L905 1200 L912 1568 H600 L612 1545 L655 1560 L675 1520 L700 1500 L705 1450 L720 1415 L765 1420 L778 1395 L780 1200 L780 1000 L772 900 L768 800 L763 700 L765 600 L763 500 Z" fill="url(#water)" />
        <path d="M776 740 L800 770 L812 740 L830 770 L840 735 L866 790 L866 880 H775 Z" fill="#0014ff" filter="url(#soft)" />
        <path d="M770 408 L767 500 L768 600 L767 700 L771 800 L778 900 L782 940" stroke="url(#shore)" strokeWidth="9" fill="none" />
        <path d="M770 408 L785 403 L791 375" stroke="#ffd800" strokeWidth="8" fill="none" />

        {/* outer wall */}
        <path d="M893 300 L905 320 L918 380 L932 412 L960 403 Q1008 410 1028 455 L1034 640 L1042 830 L1056 900 L1050 1062 L1030 1000 L1000 480 H895 Z" fill="#ff0a0e" />
        <path d="M1105 830 L1122 850 L1132 950 L1140 1060 L1175 1120 L1195 1180 L1204 1250 L1202 1350 L1190 1470 L1168 1568 H1130 L1168 1400 L1180 1300 L1175 1180 L1110 1080 L1108 930 L1098 880 Z" fill="#ff0a0e" />
        <path d="M935 325 L945 295 L990 275 L1040 268 L1070 265 L1088 300 L1108 440 L1130 490 L1132 600 L1150 640 L1140 690 L1162 760 L1190 880 L1205 990 L1225 1060 L1245 1130 L1255 1250 L1262 1400 L1260 1568 H1190 L1205 1450 L1215 1300 L1210 1160 L1185 1100 L1158 1060 L1156 1000 L1145 930 L1140 830 L1115 740 L1092 690 L1090 650 L1105 600 L1105 540 L1085 470 L1070 400 L1060 320 L1052 300 L1010 306 Z" fill="#ff0a0e" />
        <path d="M1160 1568 L1185 1480 L1197 1380 L1207 1280" stroke="#ff0a0e" strokeWidth="6" fill="none" strokeDasharray="14 6" />
        <path d="M970 360 L985 350 L1030 345 L1060 340" stroke="#ff0a0e" strokeWidth="6" fill="none" />

        {/* land */}
        <path d="M1053 925 L1105 905 L1112 1000 L1125 1090 L1050 1120 Z" fill="url(#bay)" />
        <g clipPath="url(#land)">
          <rect x="830" y="380" width="380" height="1200" fill="url(#slope)" />
          <g filter="url(#softer)">
            <path d="M845 400 L885 400 L905 620 L930 900 L925 1050 L900 850 L870 600 Z" fill="#55e800" />
            <ellipse cx="990" cy="660" rx="26" ry="90" fill="#84f200" />
            <ellipse cx="1015" cy="1000" rx="40" ry="80" fill="#00f800" />
            <ellipse cx="945" cy="1040" rx="35" ry="100" fill="#18f000" />
            <ellipse cx="960" cy="1490" rx="26" ry="120" fill="#48f000" />
            <ellipse cx="1090" cy="1100" rx="40" ry="40" fill="#e0ff00" />
          </g>
          <path d="M900 500 L930 600 L942 720 L948 880 L965 1000" stroke="#c8f800" strokeWidth="6" fill="none" opacity=".6" />
          <path d="M985 1150 L985 1300 L998 1568" stroke="#d8fc00" strokeWidth="4" fill="none" opacity=".6" />
          <path d="M898 470 H1004 L1016 620 L1024 720 L1032 850 L1048 1060" stroke="#ff7800" strokeWidth="20" fill="none" filter="url(#soft)" />
          <path d="M898 486 H1000 L1008 620 L1017 720 L1025 850 L1040 1060" stroke="#f8f000" strokeWidth="11" fill="none" filter="url(#soft)" />
          <path d="M1120 1080 L1165 1160 L1188 1250 L1188 1330 L1175 1420 L1150 1568" stroke="#ffa000" strokeWidth="16" fill="none" filter="url(#soft)" />
          <path d="M1110 1080 L1155 1160 L1177 1250 L1178 1330 L1164 1420 L1138 1568" stroke="#fff000" strokeWidth="14" fill="none" filter="url(#soft)" />
        </g>
        <path d="M882 310 L890 420 L897 480" stroke="#ffb000" strokeWidth="8" fill="none" />

        {/* bank strip */}
        <path d="M846 540 L858 640 L868 780 L877 950 L890 1150 L903 1350 L905 1568" stroke="#00f4c0" strokeWidth="8" fill="none" />
        <path d="M840 460 L855 550 L872 680 L886 850 L897 1000 L908 1200 L918 1400 L920 1568" stroke="#70f000" strokeWidth="24" fill="none" />
        <path d="M840 460 L852 550 L868 680 L882 850 L893 1000 L904 1200 L914 1400 L916 1568" stroke="#ffe400" strokeWidth="15" fill="none" />

        <path d={greenDots} fill="#40e800" />
        <path d={yellowDots} fill="#f0e800" />
        <path d={orangeDots} fill="#ff9a10" />
        <path d={blackDots} fill="#000" />
        <path d="M1124 820 L1130 900 L1135 1010 L1150 1085 L1185 1140 L1205 1200" stroke="#000" strokeWidth="9" fill="none" />
      </g>

      {/* height scale */}
      <rect x="966.500" y="479.500" width="16" height="290" fill="url(#scale)" stroke="#fff" />
      <g fill="#ddd" fontFamily="'Liberation Mono', monospace" fontSize="22">
        <text x="975" y="466">Height</text>
        <text x="990" y="486">48.183</text>
        <text x="990" y="635">43.619</text>
      </g>

      <g fontFamily="'Liberation Sans', sans-serif" fontSize="21" fill="#fff" stroke="#f01818" strokeWidth="3" paintOrder="stroke" strokeLinejoin="round">
        <text x="1322" y="678">From</text>
        <text x="1331" y="675">5.070 (3D)</text>
      </g>
    </svg>
  );
}

function ContextMenu() {
  return (
    <div role="menu" className="absolute top-[198px] left-44 z-10 flex w-[247px] flex-col border border-[#c4c6ca] bg-white shadow-[3px_3px_2px_rgba(0,0,0,0.5)]">
      {menuItems.map((m) => (
        <button key={m} type="button" role="menuitem" className="h-[30px] pl-[25px] text-left whitespace-nowrap">{m}</button>
      ))}
    </div>
  );
}

export default function App() {
  return (
    <div className="flex h-screen flex-col overflow-hidden bg-white font-['Noto_Sans',sans-serif] text-base text-black">
      <div className="flex h-6 shrink-0 bg-[#525252] text-white">
        <svg viewBox="0 0 8 20" className="h-5 w-2 shrink-0" aria-hidden="true">
          <path d="M0 2 H6 M3 3 V13" stroke="#f08030" strokeWidth="2.500" />
          <path d="M0 9 L7 13 L0 18 Z" fill="#4060ff" />
          <path d="M0 10 L3 13 L0 16 Z" fill="#a070ff" />
        </svg>
        <h1 className="flex-1 pl-[222px] text-center leading-5">CoPre</h1>
      </div>

      <div role="tablist" className="flex h-[26px] shrink-0 items-end bg-[#e1e2e6]">
        <button type="button" role="tab" aria-selected={false} className="h-[25px] pr-[19px] pl-px leading-[26px]">Основное</button>
        {tabs.map((t) => (
          <button
            key={t.name}
            type="button"
            role="tab"
            aria-selected={!!t.active}
            disabled={t.disabled}
            className={clsx('h-[25px] px-[19px] whitespace-nowrap', t.active ? 'bg-white leading-7' : 'leading-[26px]', t.disabled && 'text-[#8c8c8c]')}
          >
            {t.name}
          </button>
        ))}
      </div>

      <div className="flex h-[108px] shrink-0 overflow-hidden">
        <RibbonGroup label="Данные, записанные в поле" className="w-[294px] pl-0" labelClass="pr-4">
          <RibbonButton label="анные с RS10" className="w-[100px]"><CloudFolder arrow="left" className="mr-2" /></RibbonButton>
          <RibbonButton label="Экспорт данных с RS10" className="flex-1 pl-1"><CloudFolder arrow="right" /></RibbonButton>
        </RibbonGroup>
        <RibbonGroup label="Постобработка данных">
          <RibbonButton label="Улучшение данных" className="px-[3px]"><ImproveIcon /></RibbonButton>
          <Divider />
          <RibbonButton label="Просмотреть отчёт" className="px-[5px]"><ReportIcon /></RibbonButton>
          <Divider />
          <RibbonButton label="Экспорт" className="px-1.5"><ExportIcon /></RibbonButton>
          <Divider />
          <RibbonButton label="Отмена" disabled className="px-1.5"><CancelIcon /></RibbonButton>
        </RibbonGroup>
        <RibbonGroup label="Сшивка SLAM проектов">
          <RibbonButton label="Сшивка" className="flex-1"><StitchIcon /></RibbonButton>
        </RibbonGroup>
        <RibbonGroup label="Проверка точности данных SLAM">
          <RibbonButton label="Опознаки" className="flex-1"><MarksIcon /></RibbonButton>
          <RibbonButton label="Привязка" className="flex-1"><BindIcon /></RibbonButton>
        </RibbonGroup>
        <RibbonGroup label="Моделирование по SLAM">
          <RibbonButton label="3D модель" className="px-[5px]"><Model3DIcon /></RibbonButton>
          <RibbonButton label="3DGS модель" className="px-[5px]"><Gs3DIcon /></RibbonButton>
        </RibbonGroup>
      </div>

      <main className="relative flex min-h-0 flex-1 gap-[5px]">
        <section className="flex w-[287px] shrink-0 flex-col">
          <PanelHeader title="адачи" buttons />
          <TaskTree />
        </section>

        <section className="relative flex min-w-0 flex-1 flex-col">
          <PanelHeader title="Траектория" buttons className="pl-[5px]" />
          <TrackToolbar />
          <div className="min-h-0 flex-1">
            <TrackCanvas />
          </div>
          <button type="button" aria-label="Развернуть" className="absolute top-[315px] right-[3px] flex h-[127px] w-[26px] items-center justify-center rounded-l-3xl bg-[#fde4d2]">
            <svg viewBox="0 0 12 20" className="h-5 w-3" fill="none" stroke="#f0601c" strokeWidth="2" strokeLinecap="round" strokeLinejoin="round" aria-hidden="true">
              <path d="M11 1 L1 10 L11 19" />
            </svg>
          </button>
        </section>

        <section className="flex w-[640px] shrink-0 flex-col">
          <PanelHeader title="Вид 2D/3D" className="pl-[5px]" />
          <div className="flex min-h-0 flex-1 flex-col bg-black">
            <ViewToolbar />
            <div className="mt-[3px] min-h-0 flex-1">
              <CloudCanvas />
            </div>
          </div>
        </section>

        <ContextMenu />
      </main>
    </div>
  );
}
